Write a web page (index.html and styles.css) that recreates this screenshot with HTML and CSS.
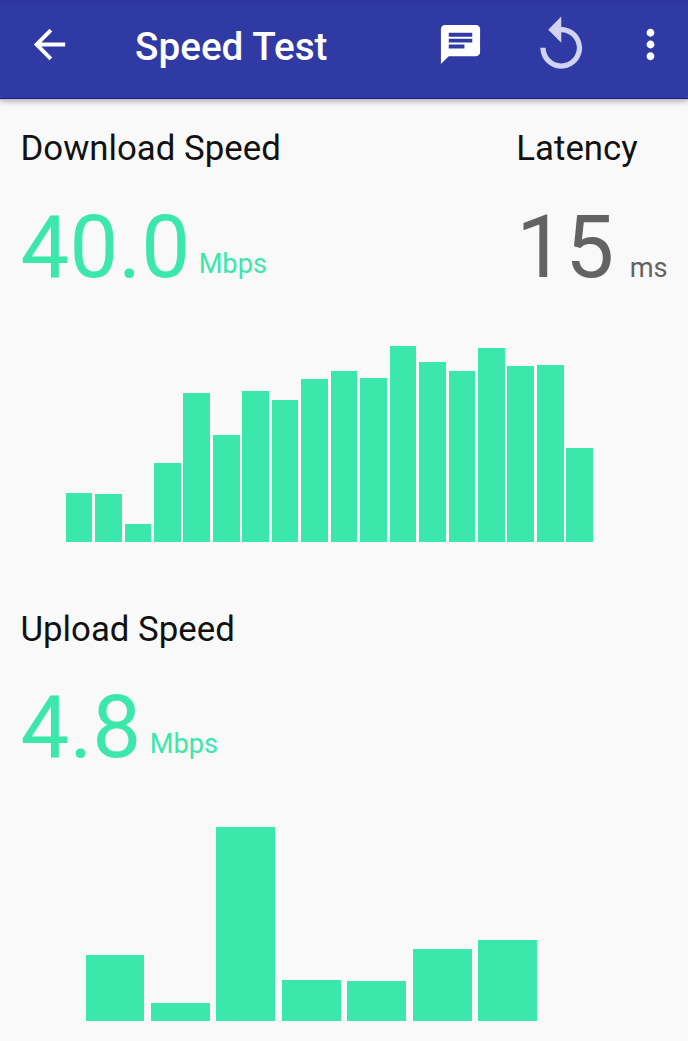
FILE: index.html
```html
<!DOCTYPE html>
<html lang="en">
  <head>
    <meta charset="utf-8">
    <title>Speed Test</title>
    <link rel="stylesheet" href="styles.css">
  </head>
  <body>
    <header class="toolbar">
      <svg class="icon back-icon" viewBox="0 0 24 24"><path d="M20 11H7.83l5.59-5.59L12 4l-8 8 8 8 1.41-1.41L7.83 13H20v-2z"/></svg>
      <h1 class="title">Speed Test</h1>
      <svg class="icon chat-icon" viewBox="0 0 24 24"><path d="M20 2H4c-1.1 0-1.99.9-1.99 2L2 22l4-4h14c1.1 0 2-.9 2-2V4c0-1.1-.9-2-2-2zM6 9h12v2H6V9zm8 5H6v-2h8v2zm4-6H6V6h12v2z"/></svg>
      <svg class="icon replay-icon" viewBox="0 0 24 24"><path d="M12 5V1L7 6l5 5V7c3.31 0 6 2.69 6 6s-2.69 6-6 6-6-2.69-6-6H4c0 4.42 3.58 8 8 8s8-3.58 8-8-3.58-8-8-8z"/></svg>
      <svg class="icon more-icon" viewBox="0 0 24 24"><path d="M12 8c1.1 0 2-.9 2-2s-.9-2-2-2-2 .9-2 2 .9 2 2 2zm0 2c-1.1 0-2 .9-2 2s.9 2 2 2 2-.9 2-2-.9-2-2-2zm0 6c-1.1 0-2 .9-2 2s.9 2 2 2 2-.9 2-2-.9-2-2-2z"/></svg>
    </header>

    <main>
      <section class="results">
        <div class="result">
          <h2 class="label">Download Speed</h2>
          <p class="reading"><span class="value">40.0</span><span class="unit">Mbps</span></p>
        </div>
        <div class="result latency">
          <h2 class="label">Latency</h2>
          <p class="reading"><span class="value">15</span><span class="unit">ms</span></p>
        </div>
      </section>

      <div class="chart download-chart">
        <div class="bar" style="height: 48.6px"></div>
        <div class="bar" style="height: 48px"></div>
        <div class="bar" style="height: 18px"></div>
        <div class="bar" style="height: 79px"></div>
        <div class="bar" style="height: 149.2px"></div>
        <div class="bar" style="height: 106.6px"></div>
        <div class="bar" style="height: 151.2px"></div>
        <div class="bar" style="height: 142px"></div>
        <div class="bar" style="height: 163px"></div>
        <div class="bar" style="height: 171px"></div>
        <div class="bar" style="height: 164px"></div>
        <div class="bar" style="height: 195.8px"></div>
        <div class="bar" style="height: 179.6px"></div>
        <div class="bar" style="height: 171px"></div>
        <div class="bar" style="height: 194.4px"></div>
        <div class="bar" style="height: 176px"></div>
        <div class="bar" style="height: 177px"></div>
        <div class="bar" style="height: 94px"></div>
      </div>

      <section class="results upload">
        <div class="result">
          <h2 class="label">Upload Speed</h2>
          <p class="reading"><span class="value">4.8</span><span class="unit">Mbps</span></p>
        </div>
      </section>

      <div class="chart upload-chart">
        <div class="bar" style="height: 66.4px"></div>
        <div class="bar" style="height: 18px"></div>
        <div class="bar" style="height: 194.5px"></div>
        <div class="bar" style="height: 41.3px"></div>
        <div class="bar" style="height: 40.4px"></div>
        <div class="bar" style="height: 72.3px"></div>
        <div class="bar" style="height: 81.3px"></div>
      </div>
    </main>
  </body>
</html>
```

FILE: styles.css
```css
* {
    box-sizing: border-box;
}

body {
    margin: 0;
    height: 1041px;
    overflow: hidden;
    background-color: #f9f9f9;
    color: #111;
    font-family: Roboto, sans-serif;
}

h1, h2, p {
    margin: 0;
    font-weight: 400;
}

.toolbar {
    display: flex;
    align-items: flex-start;
    height: 99px;
    padding-left: 26px;
    background: linear-gradient(#2d379c, #303aa4 12px);
    border-bottom: 1px solid #221f7a;
    box-shadow: 0 1px 1px #c5bddc, 0 2px 6px rgba(0, 0, 0, 0.35);
}

.icon {
    flex: none;
    width: 47px;
    height: 47px;
    margin-top: 21px;
    fill: white;
}

.title {
    width: 301.5px;
    margin-left: 62px;
    margin-top: 24px;
    font-size: 38.7px;
    font-weight: 500;
    line-height: 46px;
    color: white;
}

.replay-icon {
    width: 62.5px;
    height: 62.5px;
    margin-left: 46px;
    margin-top: 13.5px;
    fill: #d0d4f2;
}

.more-icon {
    margin-left: 34.5px;
}

.results {
    display: flex;
    justify-content: space-between;
    height: 198px;
    padding: 29px 20.5px 0 20.5px;
}

.label {
    font-size: 34.8px;
    line-height: 40px;
}

.reading {
    display: flex;
    align-items: baseline;
    margin-top: 28px;
    color: #3be7ab;
}

.value {
    font-size: 87px;
    line-height: 103px;
}

.unit {
    margin-left: 8.5px;
    font-size: 27.2px;
    line-height: 32px;
    /* Mbps sits a little above the big number's baseline */
    transform: translateY(-4px);
}

.latency .reading {
    color: #636363;
}

.latency .unit {
    margin-left: 15.5px;
    transform: none;
}

.chart {
    display: grid;
    grid-auto-flow: column;
    grid-auto-columns: 1fr;
    align-items: end;
}

.bar {
    background-color: #3be7ab;
}

.download-chart {
    width: 527.4px;
    height: 245px;
    margin-left: 65.6px;
    column-gap: 2.8px;
}

.upload {
    margin-top: 38px;
}

.upload .reading {
    margin-top: 27px;
}

.upload-chart {
    width: 451.6px;
    height: 243.3px;
    margin-left: 85.5px;
    column-gap: 6.5px;
}
```
